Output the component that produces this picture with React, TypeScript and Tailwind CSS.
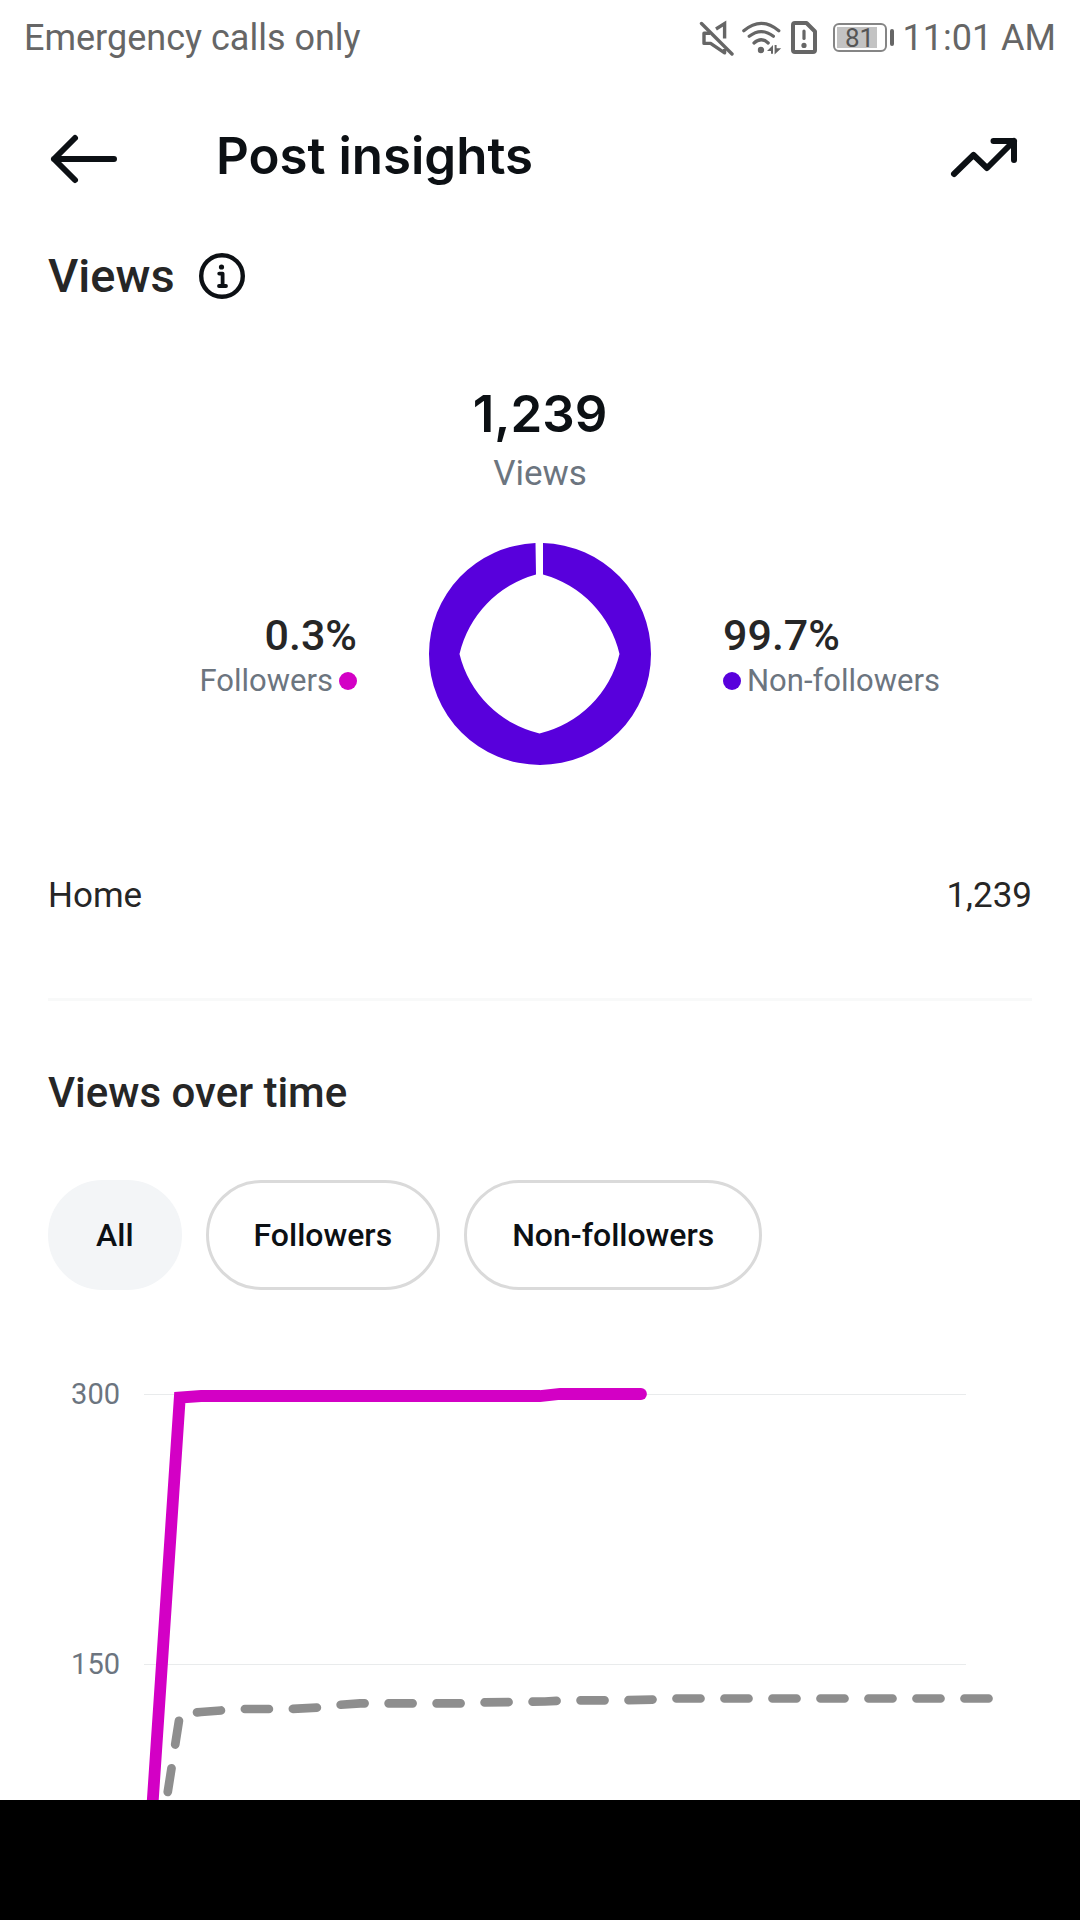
import React, { useState } from "react";

const filters = ["All", "Followers", "Non-followers"];

function MuteIcon() {
  return (
    <svg viewBox="0 0 36 36" className="size-9" fill="none" stroke="currentColor" strokeWidth="3.4" aria-hidden="true">
      <path d="M2.5 3.5 33 34" strokeLinecap="round" />
      <path d="M17 9 25.6 3.6V18.5" />
      <path d="M11 13.2H5v10.2h6.6l14 9.4V29" strokeLinejoin="round" />
    </svg>
  );
}

function WifiIcon() {
  return (
    <svg viewBox="0 0 42 36" className="h-9 w-[42px]" fill="none" stroke="currentColor" strokeWidth="3.2" strokeLinecap="round" aria-hidden="true">
      <path d="M2.8 10.8Q20.3-4 37.8 10.8" />
      <path d="M8.2 16.3Q20.2 6.8 32.4 16.3" />
      <path d="M13 23Q20.2 16.5 27.2 23" />
      <circle cx="20" cy="30" r="3.2" fill="currentColor" stroke="none" />
      <path d="M26 31 32 25v8.8h-2V31Z" fill="currentColor" stroke="none" />
      <path d="M33.6 25h2v3.2h4.6L33.6 34.500Z" fill="currentColor" stroke="none" />
    </svg>
  );
}

function SimAlertIcon() {
  return (
    <svg viewBox="0 0 30 38" className="h-[38px] w-[30px]" fill="none" stroke="currentColor" strokeWidth="4" strokeLinejoin="round" aria-hidden="true">
      <path d="M6 4h11.5L26 12.5V31a2 2 0 0 1-2 2H6a2 2 0 0 1-2-2V6a2 2 0 0 1 2-2Z" />
      <path d="M15 12v7.5" strokeLinecap="round" strokeWidth="3.2" />
      <circle cx="15" cy="26.4" r="2.6" fill="currentColor" stroke="none" />
    </svg>
  );
}

function Battery({ level }: { level: number }) {
  return (
    <div className="ml-2 flex items-center gap-[3px]">
      <div className="relative flex h-[29px] w-[54px] items-center justify-center rounded-[6px] border-2 border-[#858585]">
        <span className="absolute inset-y-[2px] left-[2px] bg-[#c3c3c3]" style={{ width: `${level}%` }} />
        <span className="relative text-[26px] leading-none text-[#555]">{level}</span>
      </div>
      <span className="h-[17px] w-1 rounded-full bg-[#666]" />
    </div>
  );
}

function StatusBar() {
  return (
    <div className="flex h-[75px] items-center justify-between px-6 text-[36px] leading-none text-[#666]">
      <span>Emergency calls only</span>
      <div className="flex items-center gap-[6px]">
        <MuteIcon />
        <WifiIcon />
        <SimAlertIcon />
        <Battery level={81} />
        <span className="ml-[3px]">11:01 AM</span>
      </div>
    </div>
  );
}

function Donut() {
  return (
    <svg viewBox="0 0 222 222" className="w-full" role="img" aria-label="99.7% of views from non-followers">
      <path
        fill="#5800dc"
        d="M114 0A111 111 0 0 1 222 111A111 111 0 0 1 111 222A111 111 0 0 1 0 111A111 111 0 0 1 106.500 0L107 31.500A108 108 0 0 0 30.500 111A108 108 0 0 0 110.500 190.500A108 108 0 0 0 190.500 111A108 108 0 0 0 114 31.500Z"
      />
    </svg>
  );
}

function ViewsChart() {
  return (
    <svg viewBox="0 0 1080 510" className="block w-full" role="img" aria-label="Views over time">
      <g stroke="#e9ebec" strokeWidth="1">
        <path d="M144 104.500H966" />
        <path d="M144 374.500H966" />
      </g>
      <g fill="#6c757f" fontSize="29" textAnchor="end">
        <text x="120" y="114">300</text>
        <text x="120" y="384">150</text>
      </g>
      <path
        d="M988.500 408.500H672L656 409.500 625 410.300H570L545 411.500 480 412.500 465 413.300H360L337 415 321 417.500 289 419H240L201 422 180 424 164 526"
        fill="none"
        stroke="#8e8e8e"
        strokeWidth="8.700"
        strokeLinecap="round"
        strokeDasharray="24 24"
      />
      <path d="M152 522 179.800 107.500 201 106H540L560 104H641" fill="none" stroke="#d300c5" strokeWidth="11.800" />
      <circle cx="641" cy="104" r="5.900" fill="#d300c5" />
    </svg>
  );
}

export default function App() {
  const [active, setActive] = useState("All");
  return (
    <div className="flex min-h-screen flex-col bg-white font-[Roboto,sans-serif] text-[#262626]">
      <StatusBar />

      <header className="flex h-[162px] items-center pr-[60px] pl-12 text-[#0c1014]">
        <button type="button" aria-label="Back" className="size-[72px]">
          <svg viewBox="0 0 72 72" className="size-full" fill="none" stroke="currentColor" strokeWidth="6" strokeLinecap="round" strokeLinejoin="round">
            <path d="M66 39H6M27 18 6 39l21 21" />
          </svg>
        </button>
        <h1 className="ml-24 flex-1 font-[Inter,sans-serif] text-[51px] leading-[60px] font-semibold">Post insights</h1>
        <button type="button" aria-label="Boost post" className="size-[72px]">
          <svg viewBox="0 0 72 72" className="size-full" fill="none" stroke="currentColor" strokeWidth="6" strokeLinecap="round" strokeLinejoin="round">
            <path d="M6 54 25.500 35 39 48 66 21M45.500 21H66V40" />
          </svg>
        </button>
      </header>

      <main>
        <section className="px-12 pt-[11px]">
          <div className="flex items-center gap-[23px]">
            <h2 className="text-[47px] leading-[56px] font-medium">Views</h2>
            <button type="button" aria-label="About views" className="size-12 text-[#0c1014]">
              <svg viewBox="0 0 48 48" className="size-full" fill="none" stroke="currentColor">
                <circle cx="24" cy="24" r="20.800" strokeWidth="4.400" />
                <circle cx="23.500" cy="15" r="2.600" fill="currentColor" stroke="none" />
                <path d="M21.200 21.600h3.400V34M21 34h7" strokeWidth="3.800" strokeLinecap="round" strokeLinejoin="round" />
              </svg>
            </button>
          </div>

          <div className="mt-20 flex flex-col items-center">
            <p className="font-[Inter,sans-serif] text-[51px] leading-[60px] font-semibold text-[#0c1014]">1,239</p>
            <p className="mt-[9px] text-[35px] leading-[42px] text-[#6c757f]">Views</p>
          </div>

          <div className="mt-12 grid grid-cols-[1fr_222px_1fr] items-center gap-x-[72px]">
            <div className="flex flex-col items-end pt-[2px]">
              <p className="text-[43px] leading-[52px] font-medium">0.3%</p>
              <p className="flex items-center gap-[6px] text-[31px] leading-10 text-[#6c757f]">
                Followers
                <span className="size-[18px] rounded-full bg-[#d300c5]" />
              </p>
            </div>
            <Donut />
            <div className="flex flex-col items-start pt-[2px]">
              <p className="text-[43px] leading-[52px] font-medium">99.7%</p>
              <p className="flex items-center gap-[6px] text-[31px] leading-10 text-[#6c757f]">
                <span className="size-[18px] rounded-full bg-[#5800dc]" />
                Non-followers
              </p>
            </div>
          </div>

          <div className="mt-[110px] flex items-center justify-between border-b-3 border-[#f8f9f9] pb-[81px] text-[35px] leading-[42px]">
            <span>Home</span>
            <span>1,239</span>
          </div>
        </section>

        <section>
          <div className="px-12 pt-[68px]">
            <h2 className="text-[42px] leading-[48px] font-medium">Views over time</h2>
            <div className="mt-[63px] flex gap-6">
              {filters.map((name) => (
                <button
                  key={name}
                  type="button"
                  aria-pressed={active === name}
                  onClick={() => setActive(name)}
                  className={
                    "h-[110px] rounded-full border-3 px-[45px] text-[32px] font-medium text-[#0c1014] " +
                    (active === name ? "border-[#f3f5f7] bg-[#f3f5f7]" : "border-[#dadada]")
                  }
                >
                  {name}
                </button>
              ))}
            </div>
          </div>
          <ViewsChart />
        </section>
      </main>

      <div className="min-h-[120px] flex-1 bg-black" />
    </div>
  );
}
